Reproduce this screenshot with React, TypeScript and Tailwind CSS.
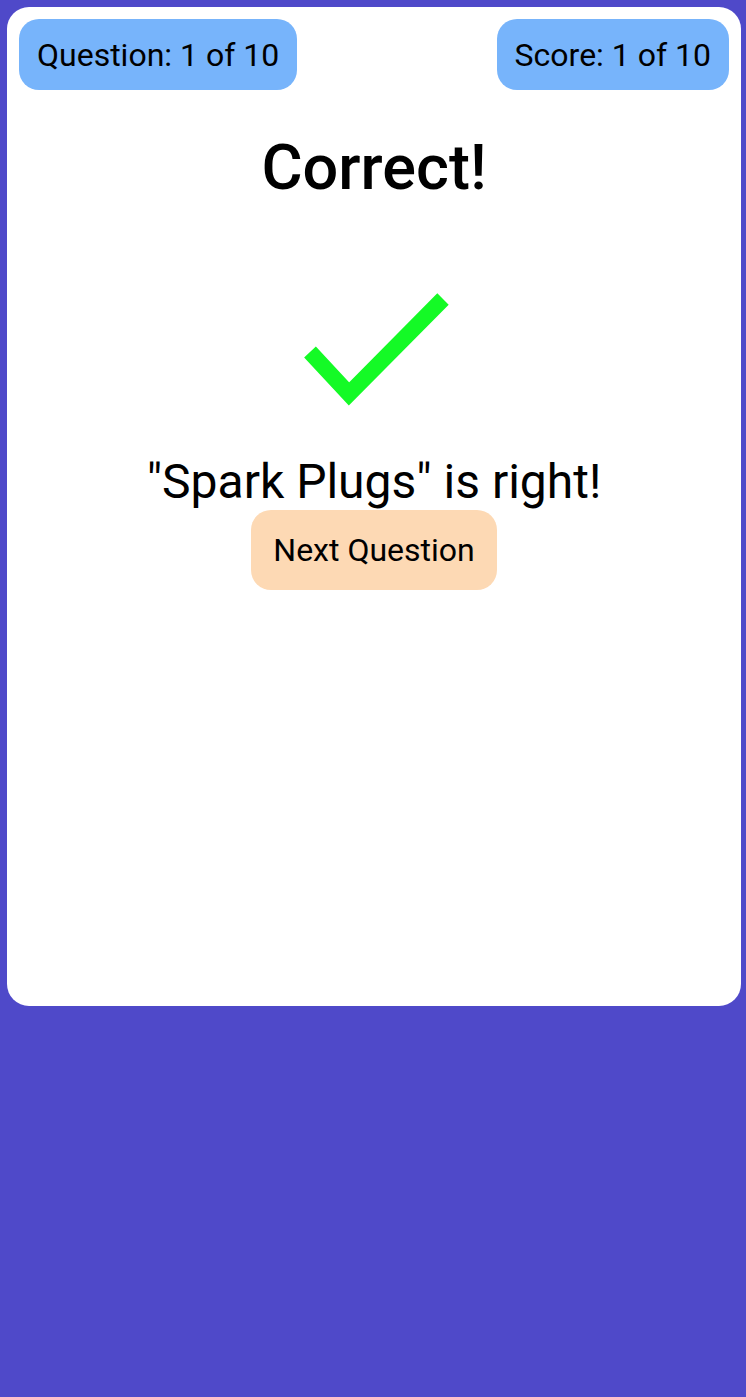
export default function App() {
  return (
    <div className="min-h-[1397px] bg-[#4f49c9] py-[7px] pl-[7px] font-['Roboto',sans-serif] text-black">
      <div className="flex h-[999px] w-[734px] flex-col rounded-[22px] bg-white p-3">
        <div className="flex items-center justify-between">
          <div className="flex h-[71px] items-center rounded-[20px] bg-[#77b4fb] px-[18px] text-[32px]">
            Question: 1 of 10
          </div>
          <div className="flex h-[71px] items-center rounded-[20px] bg-[#77b4fb] px-[18px] text-[32px]">
            Score: 1 of 10
          </div>
        </div>
        <h1 className="mt-[40px] text-center text-[63px] leading-[76px] font-medium">
          Correct!
        </h1>
        <div className="mt-[85px] flex justify-center">
          <svg width="160" height="120" viewBox="0 0 160 120">
            <path d="M16 61 L55 103 L149 8" fill="none" stroke="#14fa26" strokeWidth="16" />
          </svg>
        </div>
        <p className="mt-[43px] text-center text-[48px] leading-[56px]">
          "Spark Plugs" is right!
        </p>
        <div className="flex justify-center">
          <button className="h-[80px] w-[246px] rounded-[20px] bg-[#fdd9b4] text-[32px]">
            Next Question
          </button>
        </div>
      </div>
    </div>
  );
}
